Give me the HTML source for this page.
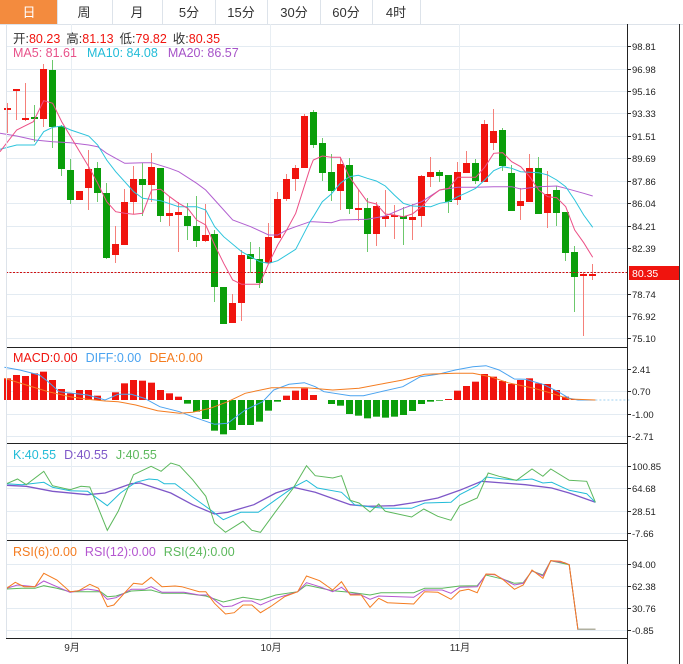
<!DOCTYPE html>
<html><head><meta charset="utf-8"><style>
html,body{margin:0;padding:0;background:#fff;width:683px;height:664px;overflow:hidden}
svg{display:block;font-family:"Liberation Sans","Noto Sans CJK SC",sans-serif}
</style></head><body>
<svg id="s" width="683" height="664" viewBox="0 0 683 664" xmlns="http://www.w3.org/2000/svg">
<rect width="683" height="664" fill="#fff"/>
<rect x="0" y="0" width="57" height="24" fill="#f38b3e"/>
<g stroke="#dde3ea" stroke-width="1">
<line x1="0" y1="24.5" x2="683" y2="24.5"/>
<line x1="57.5" y1="0" x2="57.5" y2="24"/><line x1="112.5" y1="0" x2="112.5" y2="24"/>
<line x1="162.5" y1="0" x2="162.5" y2="24"/><line x1="215.5" y1="0" x2="215.5" y2="24"/>
<line x1="267.5" y1="0" x2="267.5" y2="24"/><line x1="320.5" y1="0" x2="320.5" y2="24"/>
<line x1="372.5" y1="0" x2="372.5" y2="24"/><line x1="420.5" y1="0" x2="420.5" y2="24"/>
</g>
<g font-size="13" fill="#333" text-anchor="middle">
<text x="29" y="17" fill="#fff">日</text><text x="84" y="17">周</text><text x="137" y="17">月</text>
<text x="189" y="17">5分</text><text x="241" y="17">15分</text><text x="294" y="17">30分</text>
<text x="346" y="17">60分</text><text x="396" y="17">4时</text>
</g>
<g id="grid"></g>
<g id="plot"></g>
<g stroke="#222" stroke-width="1">
<line x1="627.5" y1="24" x2="627.5" y2="664"/>
<line x1="6" y1="347.5" x2="627" y2="347.5"/><line x1="6" y1="443.5" x2="627" y2="443.5"/>
<line x1="6" y1="540.5" x2="627" y2="540.5"/><line x1="6" y1="638.5" x2="627" y2="638.5"/>
</g>
<line x1="679.5" y1="24" x2="679.5" y2="664" stroke="#333"/>
<line x1="6.5" y1="24" x2="6.5" y2="638" stroke="#dde3ea"/>
<rect x="629" y="266" width="50" height="14" fill="#f0140e"/>
<text x="632" y="277" font-size="10.5" fill="#fff">80.35</text>
<g font-size="12.5">
<text x="13" y="43"><tspan fill="#333">开:</tspan><tspan fill="#f0140e">80.23</tspan><tspan fill="#333" dx="6">高:</tspan><tspan fill="#f0140e">81.13</tspan><tspan fill="#333" dx="6">低:</tspan><tspan fill="#f0140e">79.82</tspan><tspan fill="#333" dx="6">收:</tspan><tspan fill="#f0140e">80.35</tspan></text>
<text x="13" y="57"><tspan fill="#e8528a">MA5: 81.61</tspan><tspan fill="#22bcd8" dx="10">MA10: 84.08</tspan><tspan fill="#a653c8" dx="10">MA20: 86.57</tspan></text>
<text x="13" y="362"><tspan fill="#f0140e">MACD:0.00</tspan><tspan fill="#4aa3f0" dx="8">DIFF:0.00</tspan><tspan fill="#f47c20" dx="8">DEA:0.00</tspan></text>
<text x="13" y="459"><tspan fill="#22bcd8">K:40.55</tspan><tspan fill="#7e57c8" dx="8">D:40.55</tspan><tspan fill="#5cb85c" dx="8">J:40.55</tspan></text>
<text x="13" y="556"><tspan fill="#f47c20">RSI(6):0.00</tspan><tspan fill="#b456d0" dx="8">RSI(12):0.00</tspan><tspan fill="#5cb85c" dx="8">RSI(24):0.00</tspan></text>
</g>
<g font-size="10" fill="#333" text-anchor="middle">
<text x="72" y="651">9月</text><text x="271" y="651">10月</text><text x="460" y="651">11月</text>
</g>
<g id="lbl" font-size="9.5" fill="#222"></g>
</svg>
<script>
var NS="http://www.w3.org/2000/svg";
function el(p,t,a){var e=document.createElementNS(NS,t);for(var k in a)e.setAttribute(k,a[k]);document.getElementById(p).appendChild(e);return e;}
var gridY=[46,69,91,113,136,158,181,203,226,248,294,316,338];
var gl=["98.81","96.98","95.16","93.33","91.51","89.69","87.86","86.04","84.21","82.39","78.74","76.92","75.10"];
gridY.forEach(function(y,i){el("grid","line",{x1:6,x2:627,y1:y+.5,y2:y+.5,stroke:"#e3ebf2"});el("lbl","line",{x1:627,x2:631,y1:y+.5,y2:y+.5,stroke:"#222"});var t=el("lbl","text",{x:632,y:y+4});t.textContent=gl[i];});
el("grid","line",{x1:6,x2:627,y1:272.5,y2:272.5,stroke:"#e3ebf2"});
[[369,"2.41"],[391,"0.70"],[414,"-1.00"],[436,"-2.71"],[466,"100.85"],[488,"64.68"],[511,"28.51"],[533,"-7.66"],[564,"94.00"],[586,"62.38"],[608,"30.76"],[630,"-0.85"]].forEach(function(a){
 el("grid","line",{x1:6,x2:627,y1:a[0]+.5,y2:a[0]+.5,stroke:"#e3ebf2"});el("lbl","line",{x1:627,x2:631,y1:a[0]+.5,y2:a[0]+.5,stroke:"#222"});var t=el("lbl","text",{x:632,y:a[0]+4});t.textContent=a[1];});
[71,270,459].forEach(function(x){el("grid","line",{x1:x+.5,x2:x+.5,y1:24,y2:638,stroke:"#e8eef3"});});
var C=[[108,109,103,133,"r"],[89,90,89,120,"r"],[118,119,83,121,"r"],[117,119,105,142,"g"],[69,119,64,127,"r"],[70,127,60,148,"g"],[126,169,125,176,"g"],[170,200,159,204,"g"],[191,200,191,200,"r"],[169,188,150,210,"r"],[168,193,162,202,"g"],[193,258,183,259,"g"],[244,255,226,263,"r"],[202,245,189,245,"r"],[179,202,166,214,"r"],[179,185,163,216,"g"],[167,185,153,202,"r"],[168,216,168,222,"g"],[213,216,197,226,"r"],[212,215,202,252,"r"],[216,226,203,240,"g"],[226,241,196,247,"g"],[235,241,204,242,"r"],[234,287,230,302,"g"],[287,324,287,324,"g"],[303,323,294,323,"r"],[255,303,250,321,"r"],[254,259,242,273,"g"],[259,283,247,288,"g"],[237,263,223,263,"r"],[199,238,192,238,"r"],[179,199,174,201,"r"],[168,179,165,191,"r"],[116,168,114,168,"r"],[112,145,110,148,"g"],[143,173,138,181,"g"],[172,191,154,201,"g"],[164,191,158,210,"r"],[165,209,158,214,"g"],[208,210,190,221,"r"],[208,234,198,252,"g"],[206,234,202,246,"r"],[216,219,190,227,"r"],[215,217,205,239,"r"],[216,219,207,245,"g"],[217,220,204,240,"r"],[176,216,175,227,"r"],[172,177,157,187,"r"],[172,176,170,182,"g"],[175,202,175,213,"g"],[172,200,162,205,"r"],[163,173,151,173,"r"],[163,181,159,184,"g"],[124,182,120,182,"r"],[131,143,109,150,"r"],[130,166,128,171,"g"],[173,211,165,211,"g"],[201,206,188,220,"r"],[168,202,154,202,"r"],[168,214,157,214,"g"],[194,213,171,228,"r"],[190,213,186,226,"g"],[212,253,212,261,"g"],[252,277,246,312,"g"],[274,275,272,336,"r"],[274,276,264,280,"r"]];
C.forEach(function(c,i){var x=7+9*i;var col=c[4]=="r"?"#f0140e":"#0a9e0a";var wc=c[4]=="r"?"#f5807a":"#6cc86c";
 el("plot","line",{x1:x+.5,x2:x+.5,y1:c[2],y2:c[3],stroke:wc});
 el("plot","rect",{x:x-3,y:c[0],width:7,height:Math.max(2,c[1]-c[0]),fill:col});});
el("plot","line",{x1:6,x2:627,y1:272.5,y2:272.5,stroke:"#d01010","stroke-dasharray":"2,1.5"});
function poly(pts,sx,ox,sy,oy,col,w,dash){var s=[];for(var i=0;i<pts.length;i+=2)s.push((pts[i]/sx+ox).toFixed(1)+","+(pts[i+1]/sy+oy).toFixed(1));var a={points:s.join(" "),fill:"none",stroke:col,"stroke-width":w||1};if(dash)a["stroke-dasharray"]=dash;el("plot","polyline",a);}
var ma5a=[0,305,50,240,100,215,131,152,158,160,185,215,212,260,239,305,266,350,293,400,320,455,347,485,374,490,401,493,428,490,455,420,482,418,509,440,536,460,563,475,590,510,617,525,644,585,671,640,698,690,725,703,779,703,806,640,833,585,860,540,887,490,930,355];
var ma5b=[40,330,67,318,94,322,121,322,148,380,175,418,202,455,229,462,256,492,283,495,310,500,337,492,365,470,392,440,419,420,446,415,473,382,527,382,554,352,581,310,608,308,635,335,662,350,689,380,716,420,743,440,770,443,797,470,824,540,851,578,878,622];
var ma10a=[0,298,50,285,104,285,131,245,158,232,185,228,212,240,266,258,293,285,320,330,347,365,374,395,401,425,428,445,482,452,536,470,590,470,617,480,644,530,671,560,725,605,779,635,806,640,833,632,887,598,930,515];
var ma10b=[40,500,67,455,94,432,121,400,148,380,175,376,202,385,229,393,256,408,283,435,310,460,337,468,392,470,419,460,446,455,473,440,500,428,527,415,554,390,581,362,608,350,635,355,662,365,716,368,743,375,770,390,797,410,824,450,851,495,878,532];
var ma20a=[0,250,50,258,104,270,158,275,212,278,266,285,293,290,320,310,347,325,374,340,428,338,455,338,509,355,536,365,590,400,617,420,644,450,698,510,752,530,806,555,833,555,860,540,887,530,930,515];
var ma20b=[40,515,94,518,121,510,202,508,256,498,310,475,365,455,419,420,473,412,527,412,581,410,635,410,662,417,716,410,770,408,797,415,851,430,878,438];
function two(a,b){var s=[];for(var i=0;i<a.length;i+=2)s.push(a[i]/3,a[i+1]/3+50);for(i=0;i<b.length;i+=2)s.push(b[i]/3+300,b[i+1]/3+50);return s;}
poly(two(ma20a,ma20b),1,0,1,0,"#b260d0");poly(two(ma10a,ma10b),1,0,1,0,"#2cc4dc");poly(two(ma5a,ma5b),1,0,1,0,"#ec4f86");
var M=[100,90,93,85,80,105,132,145,135,135,152,165,142,115,105,107,113,135,145,155,176,200,222,257,268,255,240,240,230,197,170,152,137,130,150,165,177,182,207,212,220,215,218,215,210,198,177,170,167,162,137,123,110,87,95,108,117,105,100,115,117,135,155,163];
M.forEach(function(v,i){var x=7+9*i,z=345+165/3,y=345+v/3;var t=Math.min(z,y),h=Math.abs(y-z);if(h<0.5)return;el("plot","rect",{x:x-3,y:t,width:7,height:h,fill:v<165?"#f0140e":"#0a9e0a"});});
var X=2.284;
poly([10,67,45,75,90,90,110,110,135,140,165,145,200,150,240,165,270,148,300,148,330,160,365,185,410,200,440,215,490,238,520,235,560,195,600,170,625,135,660,118,695,113,720,125,740,140,800,152,830,152,870,140,920,125,960,95,1000,88,1040,75,1080,65,1110,62,1140,75,1175,102,1200,103,1240,118,1275,140,1300,160,1320,165,1360,165],X,0,3,345,"#4aa3f0");
poly([1360,165,1440,165],X,0,3,345,"#9fd0f0",1,"2,2");
poly([10,100,60,120,110,140,160,155,200,163,240,168,270,170,310,180,360,197,410,205,440,202,480,190,520,170,560,145,620,128,700,128,760,135,820,130,880,115,920,105,970,88,1040,85,1080,85,1120,95,1160,113,1220,130,1260,145,1300,162,1360,165],X,0,3,345,"#f47c20");
poly([15,127,60,130,120,145,200,155,240,150,300,122,320,120,390,150,440,185,490,213,520,208,580,185,630,150,670,133,720,148,800,185,840,190,900,188,940,180,1000,165,1050,142,1100,115,1150,120,1200,125,1260,135,1300,150,1360,178],X,0,3,443,"#7e57c8",1.3);
poly([15,122,50,125,100,118,120,133,160,143,200,145,245,188,275,150,310,118,340,108,360,110,375,122,400,122,440,162,480,200,510,230,550,208,590,208,630,170,670,133,700,112,725,135,780,148,810,185,850,193,880,196,940,196,970,180,1030,178,1050,155,1090,128,1110,102,1150,108,1180,112,1215,108,1240,120,1260,118,1300,142,1340,152,1360,178],X,0,3,443,"#22bcd8");
poly([15,122,40,108,60,125,100,85,120,128,160,140,185,130,205,132,245,262,270,205,305,95,345,70,368,85,390,60,410,68,440,110,470,160,490,240,515,268,555,235,575,262,595,268,630,205,670,135,700,68,720,98,760,105,780,98,800,172,820,180,845,207,865,183,880,205,940,222,968,198,1000,220,1030,232,1050,188,1090,165,1115,90,1140,100,1180,112,1215,78,1240,100,1258,78,1300,112,1340,115,1360,178],X,0,3,443,"#5cb85c");
poly([15,147,50,145,80,145,100,137,130,145,160,155,230,155,245,170,265,168,300,153,345,150,370,160,420,160,470,168,510,186,555,172,595,180,630,165,680,155,700,135,760,152,800,157,845,165,870,158,945,158,970,145,1010,145,1050,138,1090,137,1110,105,1150,118,1175,130,1195,128,1215,93,1240,105,1258,62,1300,74,1320,268,1360,268],X,0,3,540,"#5cb85c");
poly([15,145,40,135,80,140,100,123,130,140,160,157,200,147,225,152,245,178,265,173,300,148,330,148,345,140,370,157,420,157,455,165,475,165,510,200,530,198,555,183,575,183,595,195,630,175,680,155,700,128,730,140,760,155,780,142,800,162,820,162,845,178,865,168,945,172,970,150,1010,150,1030,160,1050,142,1090,140,1110,103,1130,104,1150,118,1175,135,1195,130,1215,92,1240,108,1258,62,1290,68,1300,74,1320,268,1360,268],X,0,3,540,"#b456d0");
poly([15,145,35,127,55,140,80,140,100,100,130,120,160,155,180,152,205,133,225,145,245,200,260,195,285,158,305,130,325,133,345,112,370,140,400,138,415,140,455,155,470,155,490,190,515,222,535,218,555,195,575,195,595,218,620,198,650,170,680,155,700,108,730,122,760,150,780,125,800,165,825,165,845,202,865,175,885,188,945,192,970,155,1000,157,1030,178,1050,153,1070,148,1090,158,1110,102,1130,103,1150,120,1175,148,1195,135,1215,90,1240,115,1258,62,1280,64,1300,74,1320,268,1360,268],X,0,3,540,"#f47c20");
poly([1320,268,1360,268],X,0,3,540,"#b0b0a0",1.5);
</script>
</body></html>
